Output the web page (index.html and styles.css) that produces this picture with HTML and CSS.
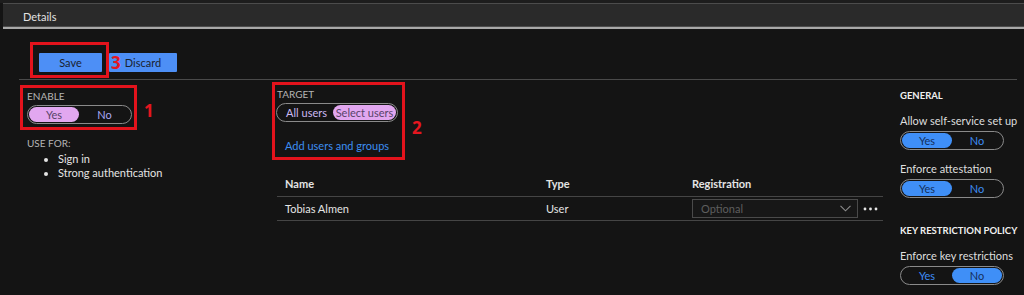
FILE: index.html
```html
<!DOCTYPE html>
<html lang="en">
<head>
<meta charset="utf-8">
<title>Details</title>
<link rel="stylesheet" href="styles.css">
</head>
<body>
<div class="topbar"></div>
<div class="header">Details</div>
<div class="main">
  <div class="toolbar">
    <div class="redbox savebox"><button class="btn">Save</button></div>
    <div class="discard-wrap">
      <button class="btn btn-discard">Discard</button>
      <span class="num num3">3</span>
    </div>
  </div>
  <div class="content">
    <div class="col-left">
      <div class="enable-wrap">
        <div class="redbox enablebox">
          <div class="label">ENABLE</div>
          <div class="toggle pink t-enable"><span class="on">Yes</span><span class="off">No</span></div>
        </div>
        <span class="num num1">1</span>
      </div>
      <div class="label usefor">USE FOR:</div>
      <ul class="uses">
        <li>Sign in</li>
        <li>Strong authentication</li>
      </ul>
    </div>
    <div class="col-mid">
      <div class="target-wrap">
        <div class="redbox targetbox">
          <div class="label">TARGET</div>
          <div class="toggle pink t-target"><span class="off">All users</span><span class="on">Select users</span></div>
          <a class="link">Add users and groups</a>
        </div>
        <span class="num num2">2</span>
      </div>
      <div class="table">
        <div class="tr th">
          <div class="c-name">Name</div>
          <div class="c-type">Type</div>
          <div class="c-reg">Registration</div>
        </div>
        <div class="tr">
          <div class="c-name">Tobias Almen</div>
          <div class="c-type">User</div>
          <div class="c-reg">
            <div class="select"><span>Optional</span>
              <svg class="chev" width="11" height="7" viewBox="0 0 11 7"><polyline points="0.5,0.8 5.5,5.8 10.5,0.8" fill="none" stroke="#8c8c8c" stroke-width="1.1"/></svg>
            </div>
            <svg class="dots" width="15" height="4" viewBox="0 0 15 4"><circle cx="2" cy="2" r="1.4" fill="#e6e6e6"/><circle cx="7.5" cy="2" r="1.4" fill="#e6e6e6"/><circle cx="13" cy="2" r="1.4" fill="#e6e6e6"/></svg>
          </div>
        </div>
      </div>
    </div>
    <div class="col-right">
      <div class="sect">GENERAL</div>
      <div class="opt">Allow self-service set up</div>
      <div class="toggle blue t-right"><span class="on">Yes</span><span class="off">No</span></div>
      <div class="opt">Enforce attestation</div>
      <div class="toggle blue t-right"><span class="on">Yes</span><span class="off">No</span></div>
      <div class="sect sect2">KEY RESTRICTION POLICY</div>
      <div class="opt">Enforce key restrictions</div>
      <div class="toggle blue t-right"><span class="off">Yes</span><span class="on">No</span></div>
    </div>
  </div>
</div>
</body>
</html>
```

FILE: styles.css
```css
* { box-sizing: border-box; }
html, body { margin: 0; padding: 0; }
body {
  background: #141414;
  color: #e4e4e4;
  font-family: "Segoe UI", Lato, "Noto Sans", sans-serif;
  font-size: 11px;
  width: 1024px;
  height: 295px;
  overflow: hidden;
  white-space: nowrap;
}
.topbar { height: 3px; background: #1d1d1d; }
.header {
  margin-left: 3px;
  height: 26px;
  background: #2a2a2a;
  border-top: 1px solid #4c4c4c;
  border-bottom: 2px solid #a8a8a8;
  box-shadow: inset 0 -1px 0 #4c4c4c;
  padding-left: 20px;
  line-height: 25px;
  color: #e2e2e2;
}
.main { padding: 0 7px 0 19px; }
.toolbar {
  display: flex;
  align-items: flex-start;
  padding-top: 13px;
  padding-bottom: 1px;
  border-bottom: 1px solid #4a4a4a;
}
.redbox { border: 3px solid #e3131c; }
.savebox { margin-left: 11px; padding: 8px 4px 3px 6px; }
.btn {
  display: block;
  height: 19px;
  border: none;
  border-radius: 1px;
  background: #4d8ff6;
  color: #1a2230;
  font-family: inherit;
  font-size: 11px;
  padding: 0;
}
.savebox .btn { width: 63px; }
.discard-wrap { position: relative; margin-top: 11px; }
.btn-discard { width: 68px; padding-left: 0; }
.num {
  position: absolute;
  color: #e5161f;
  font-weight: bold;
  font-size: 17px;
  line-height: 17px;
  font-family: "Segoe UI", "Noto Sans", sans-serif;
}
.num3 { left: 2px; top: 1px; }
.content { display: flex; }
.col-left { width: 253px; flex-shrink: 0; }
.col-mid { width: 628px; flex-shrink: 0; }
.col-right { flex: 1; min-width: 0; padding-top: 10px; }

.label { color: #b4b4b4; font-size: 10px; line-height: 12px; }

.enable-wrap { position: relative; margin-top: 5px; margin-left: 1px; }
.enablebox { width: 117px; height: 45px; padding: 2px 0 0 4px; }
.num1 { left: 124px; top: 17px; }
.toggle {
  display: flex;
  height: 19px;
  border: 1px solid #8a8a8a;
  border-radius: 10px;
  padding: 1px;
}
.toggle span {
  border-radius: 8px;
  text-align: center;
  line-height: 15px;
  font-size: 11px;
}
.t-enable { width: 105px; margin-top: 3px; }
.t-enable span { flex: 1; }
.pink .on { background: #e2a7f0; color: #574468; }
.pink .off { color: #a8a8f4; }
.t-enable .on { flex: 0 0 50px; }

.usefor { margin-top: 7px; margin-left: 8px; }
.uses { margin: 3px 0 0 0; padding-left: 39px; line-height: 14px; }
.uses li { padding-left: 0; }

.target-wrap { position: relative; margin-top: 2px; }
.targetbox { width: 133px; height: 78px; padding: 3px 0 0 2px; }
.t-target { width: 122px; margin-top: 3px; margin-left: -1px; }
.t-target .off { flex: 0 0 55px; color: #cbb8f2; padding-left: 2px; }
.t-target .on { flex: 1; }
.num2 { left: 140px; top: 37px; }
.link { display: block; color: #3c8ef1; margin: 17px 0 0 8px; line-height: 14px; }

.table { margin: 10px 0 0 5px; width: 606px; }
.tr {
  display: flex;
  align-items: center;
  border-bottom: 1px solid #454545;
  height: 24px;
}
.th { height: 27px; font-weight: 700; padding-top: 0; }
.c-name { width: 269px; padding-left: 8px; }
.c-type { width: 146px; }
.c-reg { flex: 1; display: flex; align-items: center; }
.select {
  width: 166px;
  height: 19px;
  border: 1px solid #4a4a4a;
  background: #171717;
  display: flex;
  align-items: center;
  justify-content: space-between;
  padding: 0 6px 0 8px;
  color: #5e5e5e;
}
.dots { margin-left: 5px; }

.sect { font-size: 9.5px; font-weight: 700; color: #f0f0f0; line-height: 12px; }
.opt { margin-top: 16px; line-height: 14px; color: #dedede; }
.sect + .opt { margin-top: 12px; }
.t-right { width: 104px; margin-top: 3px; }
.t-right span { flex: 1; }
.blue .on { background: #3f8ff7; color: #15305c; }
.blue .off { color: #3d8df4; }
.t-right .on { flex: 0 0 50px; }
.toggle + .opt { margin-top: 12px; }
.sect2 { margin-top: 27px; }
```
